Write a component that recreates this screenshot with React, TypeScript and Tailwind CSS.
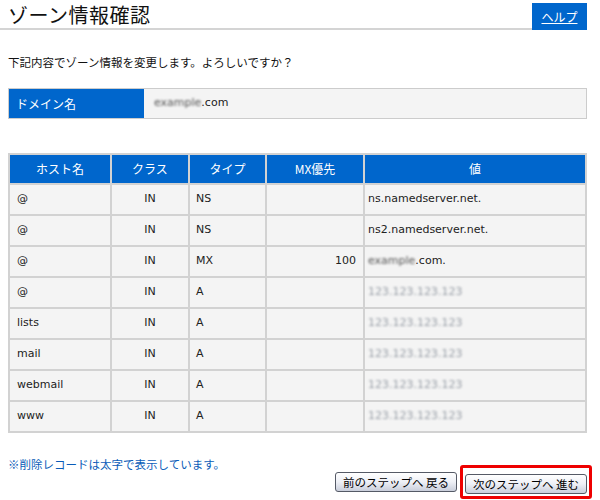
import React from 'react';

interface ZoneRecord {
  host: string;
  cls: string;
  type: string;
  mx: string;
  value: string;
  blurred?: 'domain' | 'ip';
}

const records: ZoneRecord[] = [
  { host: '@', cls: 'IN', type: 'NS', mx: '', value: 'ns.namedserver.net.' },
  { host: '@', cls: 'IN', type: 'NS', mx: '', value: 'ns2.namedserver.net.' },
  { host: '@', cls: 'IN', type: 'MX', mx: '100', value: '.com.', blurred: 'domain' },
  { host: '@', cls: 'IN', type: 'A', mx: '', value: '', blurred: 'ip' },
  { host: 'lists', cls: 'IN', type: 'A', mx: '', value: '', blurred: 'ip' },
  { host: 'mail', cls: 'IN', type: 'A', mx: '', value: '', blurred: 'ip' },
  { host: 'webmail', cls: 'IN', type: 'A', mx: '', value: '', blurred: 'ip' },
  { host: 'www', cls: 'IN', type: 'A', mx: '', value: '', blurred: 'ip' },
];

const font = 'font-["DejaVu_Sans","Noto_Sans_CJK_JP",sans-serif]';
const jp = 'font-["Noto_Sans_CJK_JP",sans-serif]';

const Blur: React.FC<{ children: React.ReactNode; gray?: boolean }> = ({ children, gray }) => (
  <span className={`inline-block blur-[1.2px] ${gray ? 'text-[#9aa0a8]' : 'text-[#555]'}`}>{children}</span>
);

const ValueCell: React.FC<{ r: ZoneRecord }> = ({ r }) => {
  if (r.blurred === 'ip') {
    return <Blur gray>123.123.123.123</Blur>;
  }
  if (r.blurred === 'domain') {
    return (
      <>
        <Blur>example</Blur>
        <span>{r.value}</span>
      </>
    );
  }
  return <span>{r.value}</span>;
};

const StepButton: React.FC<{ label: string }> = ({ label }) => (
  <button
    className={`h-[20px] w-[122px] rounded-[3px] border border-[#555a66] bg-gradient-to-b from-[#ffffff] via-[#eef0f6] to-[#c9cedb] text-[11.5px] leading-[18px] text-black whitespace-nowrap ${jp}`}
  >
    {label}
  </button>
);

export default function App() {
  return (
    <div className={`w-[600px] h-[500px] bg-white text-[#222] ${jp}`}>
      {/* title bar */}
      <div className="flex items-end pt-[3px]">
        <div className="flex-1 border-b-2 border-[#d4d4d4] pl-[8px] pb-[1px]">
          <h1 className="text-[20px] leading-[24px] text-[#111] tracking-[0.5px]">ゾーン情報確認</h1>
        </div>
        <a className="w-[55px] h-[27px] mr-[13px] bg-[#0066cc] text-white text-[12px] underline flex items-center justify-center">
          ヘルプ
        </a>
      </div>

      <p className="mt-[24px] pl-[8px] text-[11.5px] leading-[16px] text-[#111]">
        下記内容でゾーン情報を変更します。よろしいですか？
      </p>

      {/* domain */}
      <div className="mt-[18px] mx-[8px] w-[579px] flex h-[31px] border border-[#cccccc]">
        <div className="w-[135px] bg-[#0066cc] text-white text-[12px] flex items-center pl-[7px]">ドメイン名</div>
        <div className={`flex-1 bg-[#f4f4f4] flex items-center pl-[10px] text-[11px] ${font}`}>
          <Blur>example</Blur>
          <span>.com</span>
        </div>
      </div>

      {/* records */}
      <table className={`mt-[34px] ml-[8px] w-[579px] border-separate border-spacing-[2px] bg-[#d2d2d2] text-[11px] ${font}`}>
        <thead>
          <tr className="h-[28px] bg-[#0066cc] text-white">
            <th className={`w-[100px] font-normal text-[12px] ${jp}`}>ホスト名</th>
            <th className={`w-[76px] font-normal text-[12px] ${jp}`}>クラス</th>
            <th className={`w-[75px] font-normal text-[12px] ${jp}`}>タイプ</th>
            <th className={`w-[96px] font-normal text-[12px] ${jp}`}>MX優先</th>
            <th className={`font-normal text-[12px] ${jp}`}>値</th>
          </tr>
        </thead>
        <tbody>
          {records.map((r, i) => (
            <tr key={i} className="h-[29px] bg-[#f4f4f4] text-[#222]">
              <td className="pl-[7px]">{r.host}</td>
              <td className="text-center">{r.cls}</td>
              <td className="pl-[6px]">{r.type}</td>
              <td className="text-right pr-[7px]">{r.mx}</td>
              <td className="pl-[3px]">
                <ValueCell r={r} />
              </td>
            </tr>
          ))}
        </tbody>
      </table>

      <p className="mt-[24px] pl-[8px] text-[11.5px] leading-[14px] text-[#0a5cb8]">
        ※削除レコードは太字で表示しています。
      </p>

      <div className="flex justify-end items-center gap-[3px] pr-[8px] mt-[-6px]">
        <StepButton label="前のステップへ 戻る" />
        <div className="border-[3px] border-[#ee0000] rounded-[3px] px-[2px] py-[2px]">
          <StepButton label="次のステップへ 進む" />
        </div>
      </div>
    </div>
  );
}
